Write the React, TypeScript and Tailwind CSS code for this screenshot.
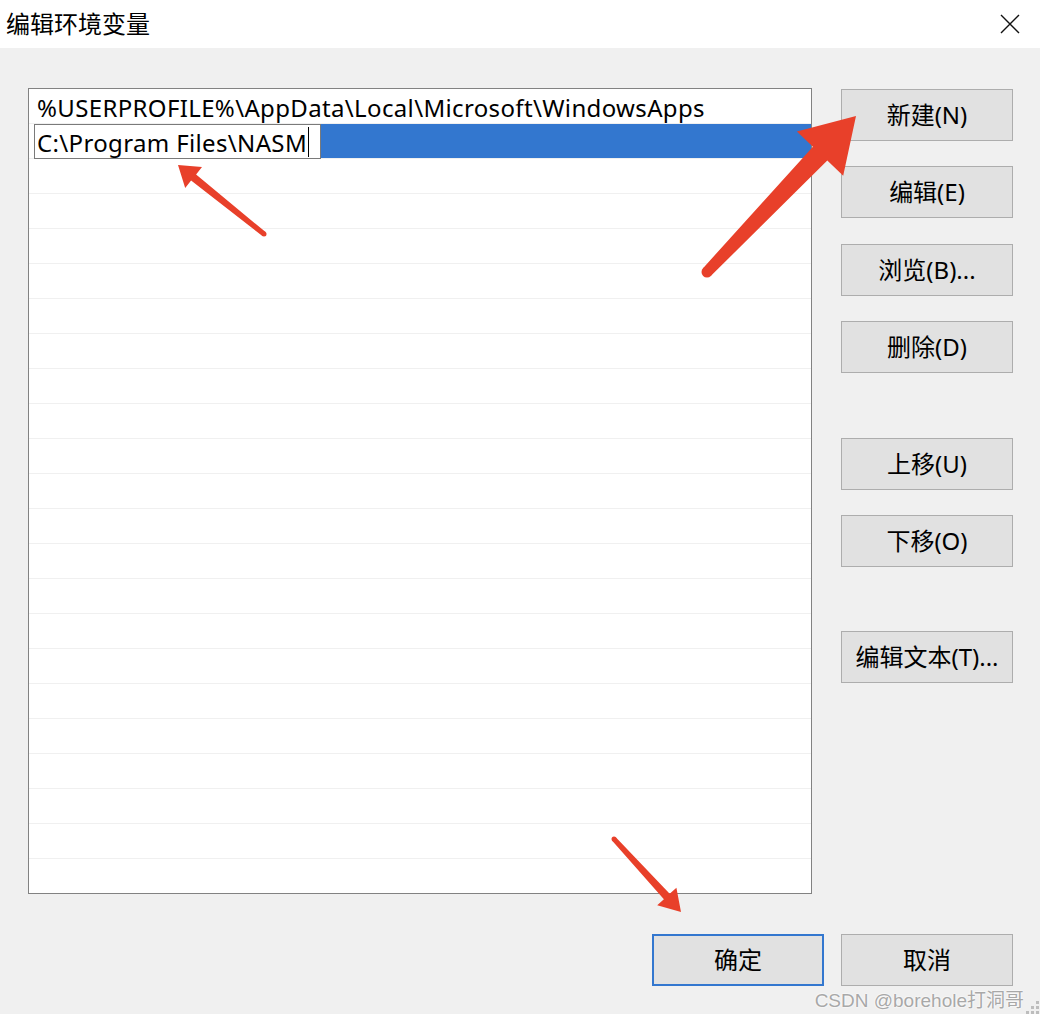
import React from "react";

type Pt = [number, number];

// tapered arrow polygon: tail -> tip
const arrowPoints = (
  tail: Pt,
  tip: Pt,
  headLen: number,
  headW: number,
  tailW: number,
  shaftW: number
) => {
  const dx = tip[0] - tail[0];
  const dy = tip[1] - tail[1];
  const len = Math.hypot(dx, dy);
  const ux = dx / len;
  const uy = dy / len;
  const nx = -uy;
  const ny = ux;
  const bx = tip[0] - ux * headLen;
  const by = tip[1] - uy * headLen;
  const p = (x: number, y: number) => `${x.toFixed(1)},${y.toFixed(1)}`;
  return [
    p(tail[0] + (nx * tailW) / 2, tail[1] + (ny * tailW) / 2),
    p(bx + (nx * shaftW) / 2, by + (ny * shaftW) / 2),
    p(bx + (nx * headW) / 2, by + (ny * headW) / 2),
    p(tip[0], tip[1]),
    p(bx - (nx * headW) / 2, by - (ny * headW) / 2),
    p(bx - (nx * shaftW) / 2, by - (ny * shaftW) / 2),
    p(tail[0] - (nx * tailW) / 2, tail[1] - (ny * tailW) / 2),
  ].join(" ");
};

const arrows = [
  { tail: [264, 234] as Pt, tip: [178, 165] as Pt, hl: 20, hw: 27, tw: 5, sw: 8 },
  { tail: [707, 272] as Pt, tip: [856, 116] as Pt, hl: 52, hw: 64, tw: 11, sw: 20 },
  { tail: [614, 839] as Pt, tip: [681, 912] as Pt, hl: 21, hw: 26, tw: 5, sw: 8 },
];

const Arrows: React.FC = () => (
  <svg className="pointer-events-none absolute inset-0" width={1040} height={1014}>
    {arrows.map((a, i) => (
      <g key={i} fill="#e8402a">
        <polygon points={arrowPoints(a.tail, a.tip, a.hl, a.hw, a.tw, a.sw)} />
        <circle cx={a.tail[0]} cy={a.tail[1]} r={a.tw / 2} />
      </g>
    ))}
  </svg>
);

const Btn: React.FC<{ label: string; className?: string; primary?: boolean }> = ({
  label,
  className = "",
  primary,
}) => (
  <div
    className={`flex h-[52px] w-[172px] items-center justify-center bg-[#e1e1e1] text-[24px] text-black ${
      primary ? "border-2 border-[#3377cf]" : "border border-[#adadad]"
    } ${className}`}
  >
    {label}
  </div>
);

const rows = Array.from({ length: 23 });

const App: React.FC = () => {
  return (
    <div
      className="relative h-[1014px] w-[1040px] overflow-hidden bg-[#f0f0f0]"
      style={{ fontFamily: '"Noto Sans", "Noto Sans CJK SC", sans-serif' }}
    >
      {/* title bar */}
      <div className="flex h-[48px] items-center justify-between bg-white pl-[6px] pr-[20px]">
        <span className="text-[24px] leading-none text-black">编辑环境变量</span>
        <svg width="20" height="20" viewBox="0 0 20 20">
          <path d="M1 1 L19 19 M19 1 L1 19" stroke="#111" strokeWidth="1.4" />
        </svg>
      </div>

      <div className="pl-[28px] pt-[40px]">
        <div className="flex gap-[29px]">
          {/* list */}
          <div className="h-[806px] w-[784px] overflow-hidden border border-[#828282] bg-white">
            {rows.map((_, i) => (
              <div key={i} className="relative h-[35px] border-b border-[#f0f0f0]">
                {i === 0 && (
                  <span className="absolute left-[8px] top-[3px] text-[24px] leading-[32px] tracking-[0.35px] text-black">
                    %USERPROFILE%\AppData\Local\Microsoft\WindowsApps
                  </span>
                )}
                {i === 1 && (
                  <div className="flex h-full">
                    <div className="ml-[5px] flex h-[35px] w-[287px] items-center border border-[#7a7a7a] bg-white pl-[2px]">
                      <span className="pt-[2px] text-[24px] leading-[32px] tracking-[0.35px] text-black">
                        C:\Program Files\NASM
                      </span>
                      <span className="ml-[1px] h-[30px] w-[1px] bg-black" />
                    </div>
                    <div className="h-[34px] flex-1 bg-[#3377cf]" />
                  </div>
                )}
              </div>
            ))}
          </div>

          {/* buttons */}
          <div className="flex flex-col pt-[1px]">
            <Btn label="新建(N)" />
            <Btn label="编辑(E)" className="mt-[25px]" />
            <Btn label="浏览(B)..." className="mt-[26px]" />
            <Btn label="删除(D)" className="mt-[25px]" />
            <Btn label="上移(U)" className="mt-[65px]" />
            <Btn label="下移(O)" className="mt-[25px]" />
            <Btn label="编辑文本(T)..." className="mt-[64px]" />
          </div>
        </div>

        <div className="mt-[40px] flex justify-end gap-[17px] pr-[27px]">
          <Btn label="确定" primary />
          <Btn label="取消" />
        </div>
      </div>

      {/* watermark */}
      <span
        className="absolute bottom-[2px] right-[16px] text-[19px] leading-[22px] text-[#a8a8a8]"
        style={{
          fontFamily: '"Liberation Sans", "Noto Sans CJK SC", sans-serif',
          textShadow: "0 0 2px #fff, 0 0 2px #fff",
        }}
      >
        CSDN @borehole打洞哥
      </span>
      {/* resize grip */}
      <svg className="absolute bottom-0 right-0" width="16" height="16" viewBox="0 0 16 16">
        {[
          [12, 3],
          [12, 8],
          [7, 8],
          [12, 13],
          [7, 13],
          [2, 13],
        ].map(([x, y], i) => (
          <rect key={i} x={x} y={y} width="3" height="3" fill="#bdbdbd" />
        ))}
      </svg>

      <Arrows />
    </div>
  );
};

export default App;
